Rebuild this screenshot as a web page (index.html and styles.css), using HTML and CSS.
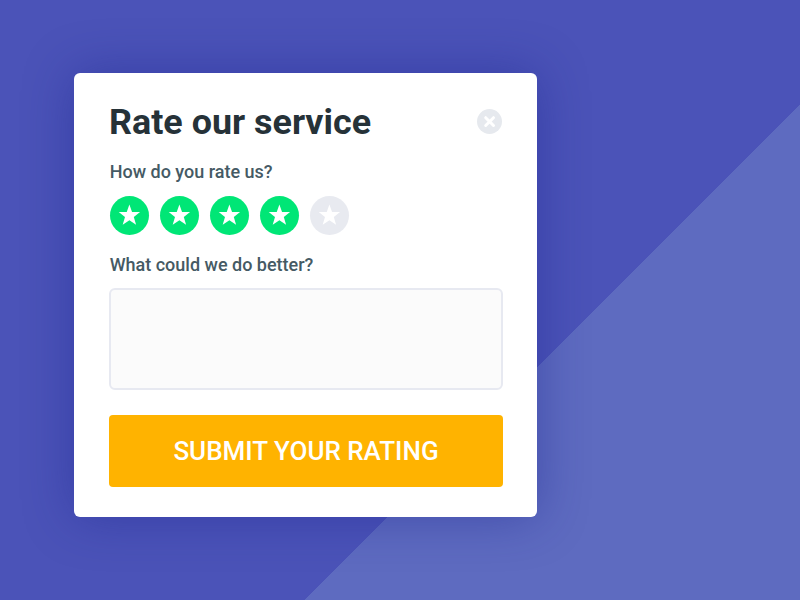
FILE: index.html
```html
<!DOCTYPE html>
<html lang="en">
<head>
<meta charset="utf-8">
<title>Rate our service</title>
<link rel="stylesheet" href="styles.css">
</head>
<body>
<svg class="defs" width="0" height="0" aria-hidden="true">
  <symbol id="star" viewBox="0 0 39 39"><path d="M19.4 8.4l2.65 7.5h8l-6.25 5.05 2.3 7.8-6.7-4.6-6.7 4.6 2.3-7.8-6.25-5.05h8z"/></symbol>
</svg>
<main class="card">
  <header class="card-header">
    <h1 class="title">Rate our service</h1>
    <button class="close" aria-label="Close"><svg viewBox="0 0 25 25"><path d="M8.7 8.7l7.8 7.8M16.5 8.7l-7.8 7.8"/></svg></button>
  </header>
  <p class="label">How do you rate us?</p>
  <div class="stars">
    <button class="star on"><svg><use href="#star"/></svg></button>
    <button class="star on"><svg><use href="#star"/></svg></button>
    <button class="star on"><svg><use href="#star"/></svg></button>
    <button class="star on"><svg><use href="#star"/></svg></button>
    <button class="star"><svg><use href="#star"/></svg></button>
  </div>
  <label class="label label-feedback" for="feedback">What could we do better?</label>
  <textarea class="feedback" id="feedback"></textarea>
  <button class="submit">SUBMIT YOUR RATING</button>
</main>
</body>
</html>
```
FILE: styles.css
```css
* { box-sizing: border-box; }
body {
  margin: 0;
  height: 600px;
  padding: 73px 0 0 74px;
  overflow: hidden;
  font-family: Roboto, sans-serif;
  background: #4b53b8;
  background-image: linear-gradient(to bottom right, transparent 50%, #5e6bc0 50.1%);
  background-size: 496px 496px;
  background-position: 304px 104px;
  background-repeat: no-repeat;
}
.defs { display: none; }
button { border: 0; padding: 0; font-family: inherit; }
.card {
  display: flex;
  flex-direction: column;
  width: 463px;
  height: 444px;
  padding: 28px 34px 30px 35px;
  border-radius: 6px;
  background: #fff;
  box-shadow: 0 0 50px rgba(26, 35, 140, 0.45);
}
.card-header { display: flex; justify-content: space-between; align-items: center; height: 42px; }
.title { margin: 0; font-size: 35.9px; line-height: 42px; font-weight: 700; color: #263238; }
.close { width: 25px; height: 25px; margin: 0 1px 1px 0; border-radius: 50%; background: #e6e9ee; }
.close svg { display: block; width: 25px; height: 25px; fill: none; stroke: #fff; stroke-width: 3; stroke-linecap: round; }
.label { margin: 18px 0 0; padding-left: 0.7px; font-size: 18px; line-height: 22px; font-weight: 500; color: #455a64; }
.label-feedback { margin-top: 19px; }
.stars { display: flex; gap: 11px; margin: 13px 0 0; height: 39px; padding-left: 1px; }
.star { width: 39px; height: 39px; border-radius: 50%; background: #e8eaf0; }
.star.on { background: #00e676; }
.star svg { display: block; width: 39px; height: 39px; fill: #fff; }
.feedback {
  display: block;
  width: 394px;
  height: 102px;
  margin: 12px 0 25px;
  border: 2px solid #e7e9f1;
  border-radius: 6px;
  background: #fbfbfb;
  resize: none;
}
.submit { height: 72px; border-radius: 4px; background: #ffb300; color: #fff; font-size: 26px; font-weight: 500; }
```
